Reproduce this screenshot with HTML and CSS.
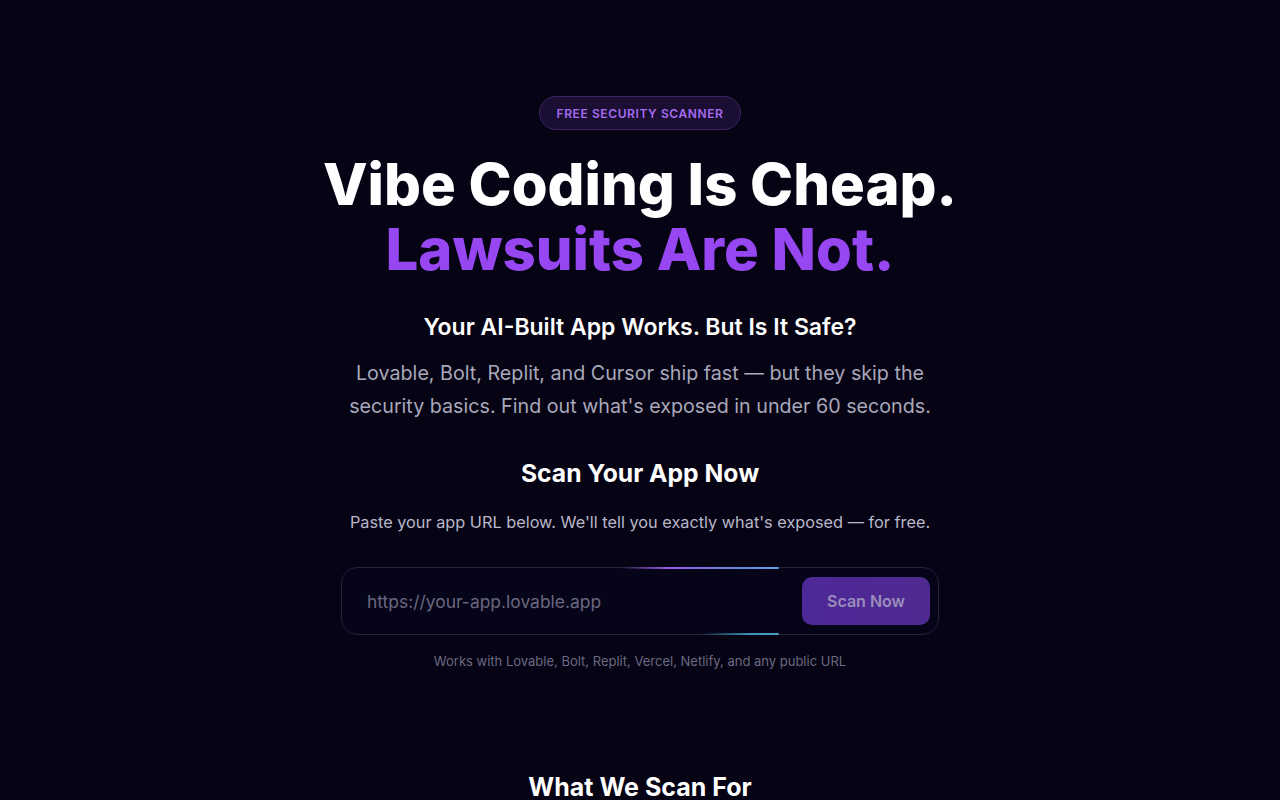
FILE: index.html
```html
<!DOCTYPE html>
<html lang="en">
<head>
<meta charset="utf-8">
<title>Vibe Coding Is Cheap. Lawsuits Are Not.</title>
<link rel="stylesheet" href="styles.css">
</head>
<body>
<main class="hero">
  <span class="badge">FREE SECURITY SCANNER</span>
  <h1 class="title">
    <span class="title-line">Vibe Coding Is Cheap.</span>
    <span class="title-line accent">Lawsuits Are Not.</span>
  </h1>
  <h2 class="subtitle">Your AI-Built App Works. But Is It Safe?</h2>
  <p class="lead">Lovable, Bolt, Replit, and Cursor ship fast — but they skip the security basics. Find out what's exposed in under 60 seconds.</p>
  <h3 class="scan-title">Scan Your App Now</h3>
  <p class="scan-text">Paste your app URL below. We'll tell you exactly what's exposed — for free.</p>
  <form class="scan-form">
    <span class="glow glow-top"></span>
    <span class="glow glow-bottom"></span>
    <input class="scan-input" type="text" placeholder="https://your-app.lovable.app">
    <button class="scan-btn" type="button">Scan Now</button>
  </form>
  <p class="works">Works with Lovable, Bolt, Replit, Vercel, Netlify, and any public URL</p>
  <h2 class="section-title">What We Scan For</h2>
</main>
</body>
</html>
```
FILE: styles.css
```css
html, body {
  margin: 0;
  padding: 0;
  background: #050314;
}
body {
  font-family: Inter, "Open Sans", sans-serif;
  color: #ffffff;
  height: 800px;
  overflow: hidden;
}
.hero {
  display: flex;
  flex-direction: column;
  align-items: center;
  padding-top: 96px;
  text-align: center;
}
.badge {
  display: inline-flex;
  align-items: center;
  box-sizing: border-box;
  height: 34px;
  padding: 0 17px;
  border: 1px solid #3a2463;
  border-radius: 999px;
  background: #1a0f33;
  color: #a66bf0;
  font-size: 12px;
  font-weight: 600;
  letter-spacing: 0.6px;
}
.title {
  margin: 22px 0 0;
  font-size: 58px;
  font-weight: 800;
  line-height: 65px;
  letter-spacing: 0;
  display: flex;
  flex-direction: column;
}
.accent {
  color: #9747f2;
}
.subtitle {
  margin: 29px 0 0;
  font-size: 23px;
  font-weight: 600;
  line-height: 32px;
}
.lead {
  margin: 14px 0 0;
  width: 600px;
  font-size: 19.7px;
  line-height: 33px;
  color: #a9a8bb;
}
.scan-title {
  margin: 33px 0 0;
  font-size: 24.7px;
  font-weight: 700;
  line-height: 34px;
}
.scan-text {
  margin: 20px 0 0;
  font-size: 16.3px;
  line-height: 24px;
  color: #b9b8c9;
}
.scan-form {
  position: relative;
  margin: 33px 0 0;
  width: 598px;
  height: 68px;
  box-sizing: border-box;
  border: 1px solid #24233a;
  border-radius: 16px;
  background: #060418;
  display: flex;
  align-items: center;
  padding: 0 8px 0 23px;
  gap: 12px;
}
.glow {
  position: absolute;
  height: 2px;
  border-radius: 2px;
}
.glow-top {
  top: -1px;
  left: 279px;
  width: 158px;
  background: linear-gradient(90deg, rgba(150, 80, 240, 0) 0%, #9a5ae8 30%, #6f7ee0 65%, #5ea0d8 100%);
}
.glow-bottom {
  bottom: -1px;
  left: 359px;
  width: 78px;
  background: linear-gradient(90deg, rgba(60, 130, 180, 0) 0%, #3a8fb4 60%, #4aa0c8 100%);
}
.scan-input {
  flex: 1;
  min-width: 0;
  border: 0;
  outline: 0;
  background: transparent;
  color: #ffffff;
  font-family: inherit;
  font-size: 17.45px;
}
.scan-input::placeholder {
  color: #6a6880;
}
.scan-btn {
  width: 128px;
  height: 48px;
  border: 0;
  border-radius: 10px;
  background: linear-gradient(90deg, #4d2898 0%, #4f2a90 100%);
  color: #9b8dbb;
  font-family: inherit;
  font-size: 16px;
  font-weight: 600;
}
.works {
  margin: 16px 0 0;
  font-size: 13px;
  line-height: 20px;
  color: #6b6a82;
}
.section-title {
  margin: 98px 0 0;
  font-size: 25px;
  font-weight: 700;
  line-height: 36px;
}
```
